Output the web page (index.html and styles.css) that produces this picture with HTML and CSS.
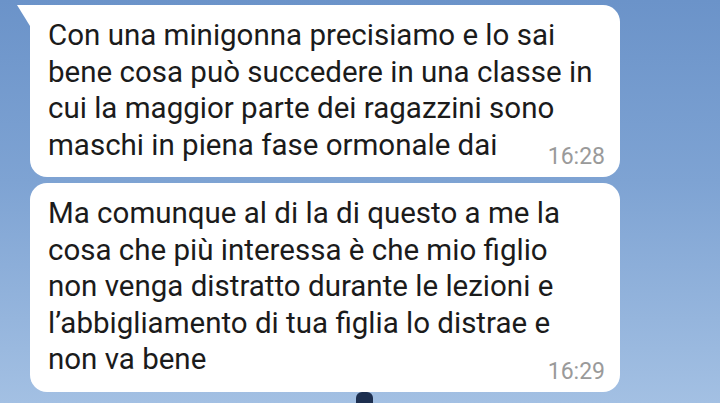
FILE: index.html
```html
<!DOCTYPE html>
<html lang="it">
<head>
    <meta charset="UTF-8">
    <meta name="viewport" content="width=device-width, initial-scale=1.0">
    <title>Chat</title>
    <link rel="stylesheet" href="styles.css">
</head>
<body>
    <div class="chat">
        <div class="bubble first">
            <p class="text">Con una minigonna precisiamo e lo sai<br>bene cosa può succedere in una classe in<br>cui la maggior parte dei ragazzini sono<br>maschi in piena fase ormonale dai</p>
            <div class="time">16:28</div>
        </div>

        <div class="bubble">
            <p class="text">Ma comunque al di la di questo a me la<br>cosa che più interessa è che mio figlio<br>non venga distratto durante le lezioni e<br>l’abbigliamento di tua figlia lo distrae e<br>non va bene</p>
            <div class="time">16:29</div>
        </div>
    </div>

    <div class="tower"></div>
</body>
</html>
```

FILE: styles.css
```css
body {
  margin: 0;
  height: 403px;
  overflow: hidden;
  font-family: 'Roboto', 'Noto Sans', sans-serif;
  background: linear-gradient(180deg, #6b93c9 0%, #7ea3d3 45%, #a3c0e3 100%);
  position: relative;
}

.chat {
  display: flex;
  flex-direction: column;
  gap: 6px;
  padding: 5px 0 0 30px;
  width: 590px;
}

.bubble {
  position: relative;
  background-color: #fff;
  border-radius: 17px;
  padding: 12px 15px 7px 18px;
}

.bubble.first {
  border-top-left-radius: 0;
}

.bubble.first::before {
  content: "";
  position: absolute;
  top: 0;
  left: -13px;
  width: 13px;
  height: 21px;
  background-color: #fff;
  clip-path: polygon(0 0, 100% 0, 100% 100%);
}

.text {
  margin: 0;
  font-size: 29.5px;
  line-height: 36.5px;
  color: #1b1b1b;
}

.time {
  margin-top: -19px;
  text-align: right;
  font-size: 23px;
  line-height: 26px;
  color: #9a9a9a;
}

.tower {
  position: absolute;
  left: 356px;
  top: 392px;
  width: 17px;
  height: 11px;
  background-color: #1d2f4f;
  border-radius: 6px 6px 0 0;
}
```
